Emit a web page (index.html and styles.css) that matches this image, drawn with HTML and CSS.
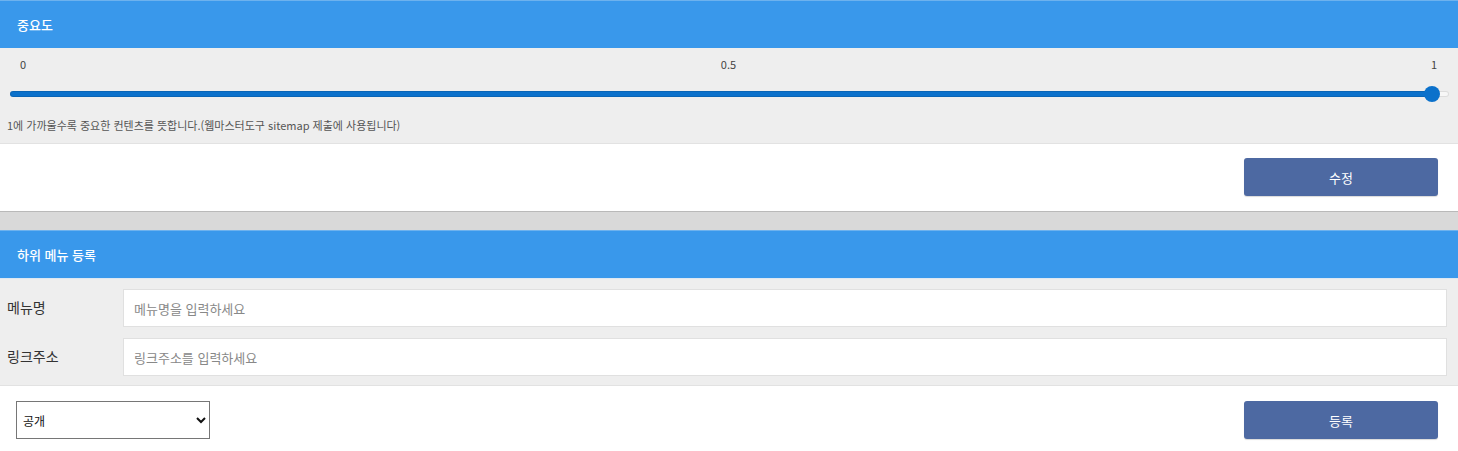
FILE: index.html
```html
<!DOCTYPE html>
<html lang="ko">
<head>
    <meta charset="utf-8">
    <title>메뉴 설정</title>
    <link rel="stylesheet" href="styles.css">
</head>
<body>
    <div class="panel">
        <div class="panel-head">중요도</div>
        <div class="panel-body">
            <div class="scale">
                <span>0</span>
                <span>0.5</span>
                <span>1</span>
            </div>
            <input type="range" class="range" min="0" max="1" step="0.001" value="0.994">
            <p class="hint">1에 가까울수록 중요한 컨텐츠를 뜻합니다.(웹마스터도구 sitemap 제출에 사용됩니다)</p>
        </div>
        <div class="panel-foot">
            <button type="button" class="btn">수정</button>
        </div>
    </div>

    <div class="sep"></div>

    <div class="panel">
        <div class="panel-head">하위 메뉴 등록</div>
        <div class="panel-body form">
            <label class="label" for="mname">메뉴명</label>
            <input class="textin" id="mname" placeholder="메뉴명을 입력하세요">
            <label class="label" for="mlink">링크주소</label>
            <input class="textin" id="mlink" placeholder="링크주소를 입력하세요">
        </div>
        <div class="panel-foot split">
            <select class="dropdown">
                <option>공개</option>
                <option>비공개</option>
            </select>
            <button type="button" class="btn">등록</button>
        </div>
    </div>
</body>
</html>
```

FILE: styles.css
```css
body {
    margin: 0;
    font-family: "Noto Sans CJK KR", "Noto Sans", sans-serif;
    font-size: 13px;
    color: #333;
    background: #fff;
}

.panel-head {
    height: 47px;
    line-height: 47px;
    padding-left: 17px;
    background: #3998eb;
    border-top: 1px solid #6db2ee;
    color: #fff;
    font-size: 13px;
    font-weight: 500;
}
.panel-body {
    background: #eeeeee;
    border-top: 1px solid #d8e6f2;
    border-bottom: 1px solid #e2e2e2;
}
.panel-head + .panel-body {
    border-top: none;
}
.panel-body.form {
    border-top: 1px solid #dde8f2;
}

.scale {
    display: flex;
    justify-content: space-between;
    padding: 9px 21px 0 20px;
    font-size: 11px;
    line-height: 14px;
    color: #444;
}

.range {
    -webkit-appearance: none;
    appearance: none;
    display: block;
    width: 1439px;
    height: 16px;
    margin: 15px 0 0 10px;
    background: transparent;
}
.range::-webkit-slider-runnable-track {
    height: 6px;
    border-radius: 3px;
    background: linear-gradient(to right, #0b71cb 99%, #f7f7f7 99%);
    box-shadow: inset 0 0 0 1px rgba(0, 0, 0, 0.1);
}
.range::-webkit-slider-thumb {
    -webkit-appearance: none;
    width: 16px;
    height: 16px;
    margin-top: -5px;
    border-radius: 50%;
    background: #0b71cb;
    border: none;
}

.hint {
    margin: 16px 0 0;
    padding: 0 0 11px 7px;
    font-size: 11px;
    line-height: 14px;
    color: #555;
}

.panel-foot {
    display: flex;
    justify-content: flex-end;
    padding: 14px 20px 15px 16px;
}
.split {
    justify-content: space-between;
    padding-top: 15px;
    padding-bottom: 12px;
}

.btn {
    width: 194px;
    height: 38px;
    border: none;
    border-radius: 3px;
    background: #4d69a2;
    color: #fff;
    font-family: inherit;
    font-size: 13px;
    box-shadow: 0 1px 1px rgba(0, 0, 0, 0.15);
}

.sep {
    height: 18px;
    background: #d9d9d9;
    border-top: 1px solid #b9b9b9;
}

.form {
    display: grid;
    grid-template-columns: 123px 1fr;
    row-gap: 11px;
    align-items: center;
    padding: 10px 11px 9px 0;
}
.label {
    padding-left: 7px;
    padding-bottom: 2px;
    font-size: 14px;
    color: #333;
}
.textin {
    height: 38px;
    box-sizing: border-box;
    border: 1px solid #e0e0e0;
    background: #fff;
    padding: 0 10px;
    font-family: inherit;
    font-size: 13px;
    color: #333;
    outline: none;
}
.textin::placeholder {
    color: #888;
}

.dropdown {
    width: 194px;
    height: 38px;
    box-sizing: border-box;
    border: 1px solid #767676;
    border-radius: 0;
    background: #fff;
    font-family: inherit;
    font-size: 12px;
    color: #111;
    padding: 0 2px;
}
```
